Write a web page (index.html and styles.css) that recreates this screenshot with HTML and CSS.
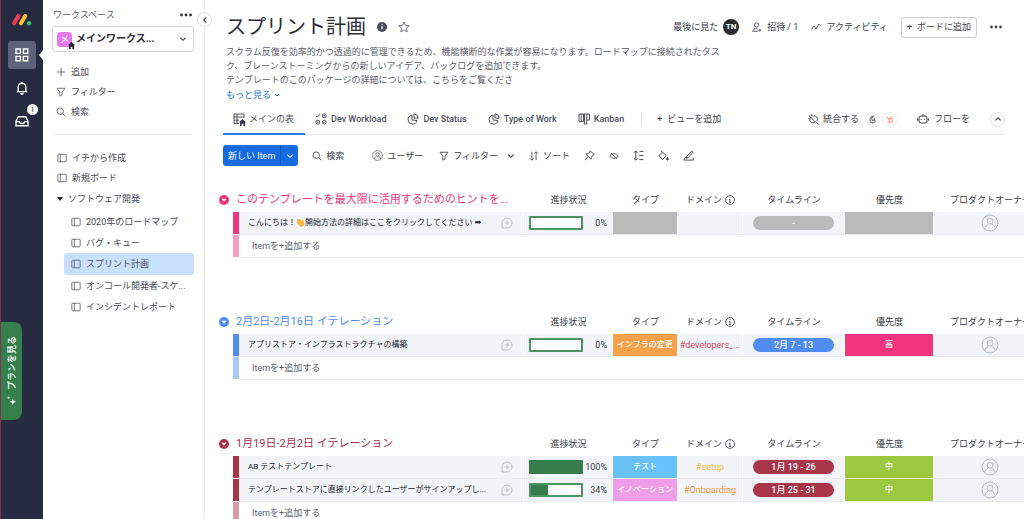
FILE: index.html
```html
<!DOCTYPE html>
<html lang="ja">
<head>
<meta charset="utf-8">
<meta name="viewport" content="width=device-width, initial-scale=1">
<title>スプリント計画</title>
<link rel="stylesheet" href="styles.css">
</head>
<body>
<svg class="sprite" aria-hidden="true">
  <symbol id="board" viewBox="0 0 12 12"><rect x="1" y="1.5" width="10" height="9" rx="1"/><path d="M4 1.5v9"/></symbol>
  <symbol id="plus" viewBox="0 0 12 12"><path d="M6 1v10M1 6h10"/></symbol>
  <symbol id="filter" viewBox="0 0 12 12"><path d="M1.2 1.5h9.6L7.4 6v3.2L4.6 11V6z"/></symbol>
  <symbol id="search" viewBox="0 0 12 12"><circle cx="5" cy="5" r="3.9"/><path d="M8 8l3.2 3.2"/></symbol>
  <symbol id="down" viewBox="0 0 12 12"><path d="M2 4l4 4 4-4"/></symbol>
  <symbol id="up" viewBox="0 0 12 12"><path d="M2 8l4-4 4 4"/></symbol>
  <symbol id="left" viewBox="0 0 12 12"><path d="M8 2L4 6l4 4"/></symbol>
  <symbol id="dots" viewBox="0 0 12 12"><g fill="currentColor" stroke="none"><circle cx="1.5" cy="6" r="1.4"/><circle cx="6" cy="6" r="1.4"/><circle cx="10.5" cy="6" r="1.4"/></g></symbol>
  <symbol id="house" viewBox="0 0 12 12"><path fill="currentColor" stroke="none" d="M6 0L0 5.6h1.6V12h3V8h2.8v4h3V5.6H12z"/></symbol>
  <symbol id="person" viewBox="0 0 18 18"><circle cx="9" cy="9" r="8"/><circle cx="9" cy="7.2" r="2.9"/><path d="M3.8 14.8c.4-2.4 1.6-3.7 3.4-4.5M14.2 14.8c-.4-2.4-1.6-3.7-3.4-4.5"/></symbol>
  <symbol id="comment" viewBox="0 0 14 14"><path d="M1.2 12.8V7a5.8 5.8 0 1 1 5.8 5.8zM7 4.3v5.4M4.3 7h5.4"/></symbol>
  <symbol id="info" viewBox="0 0 12 12"><circle cx="6" cy="6" r="5.2"/><path d="M6 5.2v3.6M5 5.4h1M4.9 8.8h2.2M6 2.9v.9"/></symbol>
  <symbol id="pie" viewBox="0 0 12 12"><path d="M5 2.2a4.5 4.5 0 1 0 5 5.3L5 7z"/><path d="M7 .8a4.6 4.6 0 0 1 4.2 4.4L7 5.1z"/></symbol>
  <symbol id="collapse" viewBox="0 0 12 12"><circle cx="6" cy="6" r="6" fill="currentColor" stroke="none"/><path d="M3 4.6h6L6 8z" fill="#fff" stroke="none"/></symbol>
</svg>

<div class="app">
  <nav class="rail" aria-label="メイン">
    <svg class="logo" viewBox="0 0 20 13"><path d="M2.2 10.3L6.4 3" stroke="#f13c55"/><path d="M9 10.3L13.2 3" stroke="#fdc02f"/><circle cx="17" cy="10.2" r="2.2" fill="#25c467" stroke="none"/></svg>
    <button class="rail-btn active" aria-label="ワークスペース"><svg class="icon i14" viewBox="0 0 14 14"><path d="M1 1h4.4v4.4H1zM8.4 1h4.4v4.4H8.4zM1 8.4h4.4v4.4H1zM8.4 8.4h4.4v4.4H8.4z"/></svg></button>
    <button class="rail-btn" aria-label="通知"><svg class="icon i14" viewBox="0 0 14 14"><path d="M1.8 10.6h10.4M3.2 10.5V6a3.8 3.8 0 0 1 7.6 0v4.5M7 1V2.2M5.6 12.2c.6 1.1 2.2 1.1 2.8 0"/></svg></button>
    <button class="rail-btn" aria-label="受信トレイ"><svg class="icon i14" viewBox="0 0 14 14"><path d="M1 7.4L3.2 2.8h7.6L13 7.4v4.4H1zM1 7.6h3.3c.3 2.6 5.1 2.6 5.4 0H13"/></svg><span class="badge">1</span></button>
    <button class="plans"><svg class="spark" viewBox="0 0 12 12"><path d="M5 3l1 3 3 1-3 1-1 3-1-3-3-1 3-1zM10 0l.6 1.5L12 2l-1.4.5L10 4l-.6-1.5L8 2l1.4-.5z"/></svg><span>プランを見る</span></button>
  </nav>

  <aside class="sidebar">
    <div class="side-top"><label for="ws">ワークスペース</label><button aria-label="ワークスペースのオプション"><svg class="icon i12"><use href="#dots"/></svg></button></div>
    <div class="workspace">
      <span class="ws-logo">メ<svg class="icon ws-home"><use href="#house"/></svg></span>
      <select id="ws"><option>メインワークス...</option></select>
      <svg class="icon i8"><use href="#down"/></svg>
    </div>
    <button class="collapse-side" aria-label="閉じる"><svg class="icon i8"><use href="#left"/></svg></button>
    <div class="actions">
      <button class="side-row"><svg class="icon i10"><use href="#plus"/></svg>追加</button>
      <button class="side-row"><svg class="icon i10"><use href="#filter"/></svg>フィルター</button>
      <button class="side-row"><svg class="icon i10"><use href="#search"/></svg>検索</button>
    </div>
    <div class="boards">
      <a class="side-row" href="#"><svg class="icon i10"><use href="#board"/></svg>イチから作成</a>
      <a class="side-row" href="#"><svg class="icon i10"><use href="#board"/></svg>新規ボード</a>
      <button class="side-row folder"><svg class="caret" viewBox="0 0 6 4"><path d="M0 0h6L3 4z"/></svg>ソフトウェア開発</button>
      <a class="side-row sub" href="#"><svg class="icon i10"><use href="#board"/></svg>2020年のロードマップ</a>
      <a class="side-row sub" href="#"><svg class="icon i10"><use href="#board"/></svg>バグ・キュー</a>
      <a class="side-row sub selected" href="#" aria-current="page"><svg class="icon i10"><use href="#board"/></svg>スプリント計画</a>
      <a class="side-row sub" href="#"><svg class="icon i10"><use href="#board"/></svg>オンコール開発者-スケ...</a>
      <a class="side-row sub" href="#"><svg class="icon i10"><use href="#board"/></svg>インシデントレポート</a>
    </div>
  </aside>

  <main class="main">
    <header class="head">
      <div class="title-row">
        <h1>スプリント計画</h1>
        <button aria-label="ボード情報"><svg class="i10" viewBox="0 0 10 10"><circle cx="5" cy="5" r="5" fill="#4a4d63"/><path d="M5 4.3v3M5 2.2v1.1" stroke="#fff" stroke-width="1.3"/></svg></button>
        <button aria-label="お気に入り"><svg class="icon i12 star" viewBox="0 0 12 12"><path d="M6 .9l1.5 3.4 3.7.4-2.8 2.5.8 3.7L6 9l-3.2 1.9.8-3.7L.8 4.7l3.7-.4z"/></svg></button>
        <div class="head-actions">
          <button>最後に見た<span class="avatar">TN</span></button>
          <button><svg class="icon i10" viewBox="0 0 12 12"><circle cx="5.5" cy="3.6" r="2.6"/><path d="M7 8.5C4 7.2 1.2 8.6 1 11.2h6M9.5 8v3.6M7.7 9.8h3.6"/></svg>招待 / 1</button>
          <button><svg class="icon i10" viewBox="0 0 12 12"><path d="M.5 9l3-4.5 2.5 4 3.5-6 1.8 2"/></svg>アクティビティ</button>
          <button class="outlined"><span>+</span>ボードに追加</button>
          <button aria-label="その他"><svg class="icon i12"><use href="#dots"/></svg></button>
        </div>
      </div>
      <p class="desc">スクラム反復を効率的かつ透過的に管理できるため、機能横断的な作業が容易になります。ロードマップに接続されたタスク、ブレーンストーミングからの新しいアイデア、バックログを追加できます。<br>テンプレートのこのパッケージの詳細については、こちらをご覧くださ</p>
      <a class="more" href="#">もっと見る<svg class="icon i6"><use href="#down"/></svg></a>
    </header>

    <div class="tabs">
      <a class="tab current" href="#"><span class="tab-home"><svg class="icon i12" viewBox="0 0 12 12"><path d="M1 1h10v4M1 1v9.5h5M1 4h10M1 7.2h5M4 1v9.5"/></svg><svg class="icon mini-home"><use href="#house"/></svg></span>メインの表</a>
      <a class="tab" href="#"><svg class="icon i12" viewBox="0 0 12 12"><path d="M.8 2.8l1.4 1.4L5 1.2"/><circle cx="9.2" cy="2.8" r="1.9"/><circle cx="2.8" cy="9.2" r="1.9"/><circle cx="9.2" cy="9.2" r="1.9"/><path d="M8.3 2.8h1.8M2 9.2h1.6M8.3 9.2h1.8"/></svg>Dev Workload</a>
      <a class="tab" href="#"><svg class="icon i12"><use href="#pie"/></svg>Dev Status</a>
      <a class="tab" href="#"><svg class="icon i12"><use href="#pie"/></svg>Type of Work</a>
      <a class="tab" href="#"><svg class="icon i12" viewBox="0 0 12 12"><path d="M3.2 8.5H1V1h10.5v6H8.7V1M3.2 1v7.500M3.2 8.500h2.300V1M6.500 1v10h2.200V7"/></svg>Kanban</a>
      <button class="add-view"><span>+</span>ビューを追加</button>
      <div class="tabs-right">
        <button class="integrate"><svg class="icon i11" viewBox="0 0 12 12"><path d="M3.200 3.800l5 5M3.200 3.800c-1.500 1.500-1.500 3.500-.2 4.800s3.500 1.400 5.200.2M5 2.600c1.600-1 3.400-.7 4.500.5s1.200 3 .2 4.500M1 1.800l2.200 2M3.800.6l.7 1.700M.4 5h1.500M9 9.200l2.200 2"/></svg>統合する
          <span class="apps"><span class="app-dot"><svg viewBox="0 0 10 10" stroke="#777"><path d="M6.8 1.2C4 .8 1.5 3.5 2.3 6.2c.8 3 4.5 3.6 6 .8M6.8 1.2c-2 1-3 3-2.2 4.8M4.6 6h2.8L6.6 3.2"/></svg></span><span class="app-dot"><svg viewBox="0 0 10 10" stroke="#ff9a85"><circle cx="6.3" cy="6" r="1.9"/><path d="M1.2 1.8L5 4.8M6.5 4V1.2M5 7.5L3 9.2"/></svg></span></span></button>
        <button><svg class="icon i12" viewBox="0 0 12 12"><rect x="2" y="3" width="8" height="7" rx="2"/><path d="M6 1v2M.6 5.3v2.4M11.4 5.3v2.4M4.3 6v1M7.7 6v1"/></svg>フローを</button>
        <button class="round" aria-label="ヘッダーを折りたたむ"><svg class="icon i8"><use href="#up"/></svg></button>
      </div>
    </div>

    <div class="toolbar">
      <div class="new-item"><button>新しい Item</button><button class="split" aria-label="その他の追加"><svg class="icon i8"><use href="#down"/></svg></button></div>
      <button class="tool-search"><svg class="icon i10"><use href="#search"/></svg>検索</button>
      <button><svg class="icon i11"><use href="#person"/></svg>ユーザー</button>
      <button class="tool-filter"><svg class="icon i10"><use href="#filter"/></svg>フィルター<svg class="icon i8 after"><use href="#down"/></svg></button>
      <button><svg class="icon i10" viewBox="0 0 12 12"><path d="M3.5 1v10M1.5 9l2 2 2-2M8.5 11V1M6.5 3l2-2 2 2"/></svg>ソート</button>
      <button aria-label="固定"><svg class="icon i11" viewBox="0 0 12 12"><path d="M7 1l4 4-1.2.5L8 8l-.3 2L2 4.5l2.2-.5 2.300-1.800zM4.500 7.500L1 11"/></svg></button>
      <button aria-label="非表示"><svg class="icon i10" viewBox="0 0 12 12"><path d="M.8 6C3 2.3 9 2.3 11.2 6 9 9.7 3 9.7.8 6zM2.500 2.500l7 7"/></svg></button>
      <button aria-label="行の高さ"><svg class="icon i11" viewBox="0 0 12 12"><path d="M3 1v10M1 3l2-2 2 2M1 9l2 2 2-2M7 1.5h4.5M7 6h4.5M7 10.5h4.5"/></svg></button>
      <button aria-label="色"><svg class="icon i11" viewBox="0 0 12 12"><path d="M3 .8l6 5.200-4 4.400L1 6.200l4-3.700"/><path d="M10.300 8c1.600 2.200.8 3 0 3s-1.600-.8 0-3z" fill="currentColor"/></svg></button>
      <button aria-label="編集"><svg class="icon i11" viewBox="0 0 12 12"><path d="M4 7l5.500-5.800 1.500 1.400L5.700 8.300 3.700 9zM3 7.500L.8 11h10.400V8.500"/></svg></button>
    </div>

    <div class="groups">
      <table class="group pink">
        <colgroup><col class="c-gap"><col class="c-strip"><col><col class="c-progress"><col class="c-type"><col class="c-domain"><col class="c-time"><col class="c-priority"><col class="c-owner"></colgroup>
        <thead><tr><th colspan="3"><div class="group-title"><button aria-label="グループを折りたたむ"><svg class="icon i10"><use href="#collapse"/></svg></button><h2>このテンプレートを最大限に活用するためのヒントを...</h2></div></th><th>進捗状況</th><th>タイプ</th><th><span class="with-info">ドメイン<svg class="icon i10"><use href="#info"/></svg></span></th><th>タイムライン</th><th>優先度</th><th>プロダクトオーナー</th></tr></thead>
        <tbody>
          <tr><td class="gap"></td><td class="strip"></td><td><div class="name"><span>こんにちは！<svg class="wave" viewBox="0 0 12 12"><path d="M2.2 5.5L1.3 3.3c-.3-.8.8-1.3 1.2-.5L2 1.9c-.3-.9.9-1.4 1.3-.6l.5.6C4 .8 5 .7 5.4 1.3L8.3 5 8.1 3c0-1.1 1.5-1.2 1.7-.1l1 4.1c.4 2-1.1 4.3-3.3 4.5-1.5.2-2.7-.5-3.6-1.6L1 6.7c-.5-.8.5-1.7 1.2-1.2z" fill="#fbb944"/><path d="M2.5 3L5.5 6.7M3.6 1.9l3.2 4M2.2 5.5l2 2.2" stroke="#dd8b22" stroke-width=".5" fill="none"/></svg>開始方法の詳細はここをクリックしてください <span class="arrow">&#10145;&#65038;</span></span><button aria-label="コメント"><svg class="icon i12"><use href="#comment"/></svg></button></div></td><td><div class="progress"><div class="bar" role="progressbar" aria-label="進捗状況" aria-valuenow="0"></div>0%</div></td><td class="fill grey"></td><td></td><td><span class="pill grey">-</span></td><td class="fill grey"></td><td class="owner"><svg class="icon i18"><use href="#person"/></svg></td></tr>
          <tr class="add"><td class="gap"></td><td class="strip"></td><td colspan="7"><button>Itemを+追加する</button></td></tr>
        </tbody>
      </table>

      <table class="group blue">
        <colgroup><col class="c-gap"><col class="c-strip"><col><col class="c-progress"><col class="c-type"><col class="c-domain"><col class="c-time"><col class="c-priority"><col class="c-owner"></colgroup>
        <thead><tr><th colspan="3"><div class="group-title"><button aria-label="グループを折りたたむ"><svg class="icon i10"><use href="#collapse"/></svg></button><h2>2月2日-2月16日 イテレーション</h2></div></th><th>進捗状況</th><th>タイプ</th><th><span class="with-info">ドメイン<svg class="icon i10"><use href="#info"/></svg></span></th><th>タイムライン</th><th>優先度</th><th>プロダクトオーナー</th></tr></thead>
        <tbody>
          <tr><td class="gap"></td><td class="strip"></td><td><div class="name"><span>アプリストア・インフラストラクチャの構築</span><button aria-label="コメント"><svg class="icon i12"><use href="#comment"/></svg></button></div></td><td><div class="progress"><div class="bar" role="progressbar" aria-label="進捗状況" aria-valuenow="0"></div>0%</div></td><td class="fill orange">インフラの変更</td><td class="tag t-red">#developers_...</td><td><span class="pill">2月 7 - 13</span></td><td class="fill high">高</td><td class="owner"><svg class="icon i18"><use href="#person"/></svg></td></tr>
          <tr class="add"><td class="gap"></td><td class="strip"></td><td colspan="7"><button>Itemを+追加する</button></td></tr>
        </tbody>
      </table>

      <table class="group red">
        <colgroup><col class="c-gap"><col class="c-strip"><col><col class="c-progress"><col class="c-type"><col class="c-domain"><col class="c-time"><col class="c-priority"><col class="c-owner"></colgroup>
        <thead><tr><th colspan="3"><div class="group-title"><button aria-label="グループを折りたたむ"><svg class="icon i10"><use href="#collapse"/></svg></button><h2>1月19日-2月2日 イテレーション</h2></div></th><th>進捗状況</th><th>タイプ</th><th><span class="with-info">ドメイン<svg class="icon i10"><use href="#info"/></svg></span></th><th>タイムライン</th><th>優先度</th><th>プロダクトオーナー</th></tr></thead>
        <tbody>
          <tr><td class="gap"></td><td class="strip"></td><td><div class="name"><span>AB テストテンプレート</span><button aria-label="コメント"><svg class="icon i12"><use href="#comment"/></svg></button></div></td><td><div class="progress"><div class="bar" role="progressbar" aria-label="進捗状況" aria-valuenow="100"><div style="width:100%"></div></div>100%</div></td><td class="fill sky">テスト</td><td class="tag t-yellow">#setup</td><td><span class="pill">1月 19 - 26</span></td><td class="fill mid">中</td><td class="owner"><svg class="icon i18"><use href="#person"/></svg></td></tr>
          <tr><td class="gap"></td><td class="strip"></td><td><div class="name"><span>テンプレートストアに直接リンクしたユーザーがサインアップし...</span><button aria-label="コメント"><svg class="icon i12"><use href="#comment"/></svg></button></div></td><td><div class="progress"><div class="bar" role="progressbar" aria-label="進捗状況" aria-valuenow="34"><div style="width:34%"></div></div>34%</div></td><td class="fill orchid">イノベーション</td><td class="tag t-orange">#Onboarding</td><td><span class="pill">1月 25 - 31</span></td><td class="fill mid">中</td><td class="owner"><svg class="icon i18"><use href="#person"/></svg></td></tr>
          <tr class="add"><td class="gap"></td><td class="strip"></td><td colspan="7"><button>Itemを+追加する</button></td></tr>
        </tbody>
      </table>
    </div>
  </main>
</div>
</body>
</html>
```

FILE: styles.css
```css
* { box-sizing: border-box; }

body {
  margin: 0;
  background: #fff;
  color: #3b3d48;
  font: 9px/14px Roboto, "Noto Sans CJK JP", sans-serif;
  white-space: nowrap;
}

button, select {
  margin: 0;
  padding: 0;
  border: 0;
  background: none;
  color: inherit;
  font: inherit;
  white-space: nowrap;
}

button {
  display: inline-flex;
  align-items: center;
  gap: 5px;
  cursor: pointer;
}

a { color: inherit; text-decoration: none; }
h1, h2, p { margin: 0; font-weight: 400; }
.sprite { position: absolute; width: 0; height: 0; }

.icon { flex: none; fill: none; stroke: currentColor; }
.i6 { width: 6px; height: 6px; stroke-width: 2; }
.i8 { width: 8px; height: 8px; stroke-width: 1.6; }
.i10 { width: 10px; height: 10px; }
.i11 { width: 11px; height: 11px; }
.i12 { width: 12px; height: 12px; }
.i14 { width: 14px; height: 14px; stroke-width: 1.4; }
.i18 { width: 18px; height: 18px; }

.app { display: flex; height: 100vh; overflow: hidden; }

/* Icon rail */
.rail {
  position: relative;
  flex: none;
  display: flex;
  flex-direction: column;
  align-items: center;
  gap: 5px;
  width: 43px;
  padding-top: 13px;
  border-left: 1px solid #84304a;
  background: #272b42;
  color: #fff;
}
.logo { width: 20px; height: 13px; margin-bottom: 10px; stroke-width: 4; stroke-linecap: round; }
.rail-btn { position: relative; justify-content: center; width: 28px; height: 28px; border-radius: 3px; }
.rail-btn.active { background: #5e6278; }
.rail-btn.active::after {
  content: "";
  position: absolute;
  right: -7px;
  border: 5px solid transparent;
  border-right: 4px solid #fff;
  border-left: 0;
}
.badge {
  position: absolute;
  top: -3px;
  right: -2px;
  width: 11px;
  border-radius: 50%;
  background: #fff;
  color: #272b42;
  font-size: 8px;
  line-height: 11px;
  text-align: center;
}
.plans {
  position: absolute;
  left: 0;
  bottom: 99px;
  flex-direction: column-reverse;
  justify-content: center;
  gap: 6px;
  width: 21px;
  height: 98px;
  border-radius: 0 8px 8px 0;
  background: #357f4c;
  font-weight: 500;
}
.plans span { writing-mode: vertical-rl; text-orientation: sideways; transform: rotate(180deg); }
.spark { width: 10px; height: 10px; fill: #fff; transform: rotate(-90deg); }

/* Sidebar */
.sidebar {
  position: relative;
  flex: none;
  width: 162px;
  padding: 8px 10px;
  border-right: 1px solid #e9ebf0;
}
.side-top { display: flex; justify-content: space-between; padding-right: 2px; color: #5a5d6b; }
.side-top svg { color: #333; }
.workspace {
  display: flex;
  align-items: center;
  gap: 4px;
  height: 26px;
  margin: 4px 0 10px -1px;
  padding: 0 6px 0 4px;
  border: 1px solid #d5d7df;
  border-radius: 3px;
}
.ws-logo {
  position: relative;
  width: 15px;
  border-radius: 4px;
  background: #e57af0;
  color: #fff;
  font-size: 10px;
  line-height: 15px;
  text-align: center;
}
.ws-home { position: absolute; right: -3px; bottom: -2px; width: 7px; height: 7px; color: #222; }
.workspace select { flex: 1; min-width: 0; appearance: none; font-size: 10px; font-weight: 700; color: #292b35; }
.collapse-side, .round {
  justify-content: center;
  width: 15px;
  height: 15px;
  border: 1px solid #dcdfe6;
  border-radius: 50%;
  background: #fff;
}
.collapse-side { position: absolute; top: 12px; right: -8px; z-index: 1; }
.side-row { display: flex; align-items: center; gap: 5px; height: 20px; padding-left: 4px; color: #484a56; }
.side-row .icon { color: #5a5d6c; }
.actions { margin: 0 2px; padding-bottom: 12px; border-bottom: 1px solid #dfe3ee; }
.actions .side-row { padding-left: 1px; }
.boards { padding-top: 13px; }
.folder { height: 21px; margin-bottom: 2px; }
.caret { width: 6px; height: 4px; fill: #222; }
.sub { height: 21px; margin-left: 11px; padding-left: 7px; border-radius: 3px; }
.sub.selected { height: 22px; background: #c9e1fd; }

/* Board header */
.main { flex: 1; min-width: 0; overflow: hidden; }
.head { padding: 12px 22px 0 21px; }
.title-row { display: flex; align-items: center; gap: 11px; height: 30px; }
h1 { color: #2b2d36; font-size: 20px; line-height: 30px; }
.star { color: #6b6e7c; }
.head-actions { display: flex; align-items: center; gap: 13px; margin-left: auto; }
.head-actions .icon { color: #444; }
.avatar {
  width: 16px;
  border-radius: 50%;
  background: #2c2c2f;
  color: #fff;
  font-size: 8px;
  font-weight: 700;
  line-height: 16px;
  text-align: center;
}
.outlined { height: 21px; padding: 0 5px; border: 1px solid #c9ccd8; border-radius: 3px; }
.desc { max-width: 500px; margin-top: 3px; color: #5b5e6c; white-space: normal; }
.more { display: inline-flex; align-items: center; gap: 3px; margin-top: 1px; color: #1a73e8; }

/* View tabs */
.tabs { display: flex; align-items: center; height: 31px; margin: 2px 19px 0 18px; border-bottom: 1px solid #e3e5ec; }
.tab { display: flex; align-items: center; gap: 4px; align-self: stretch; padding: 0 11px 0 10px; color: #50525d; font-weight: 500; }
.tab.current { margin-bottom: -1px; border-bottom: 2px solid #2a7de9; font-weight: 400; }
.tab-home { position: relative; display: flex; }
.mini-home { position: absolute; right: -1px; bottom: -1px; width: 7px; height: 7px; color: #33364a; }
.add-view { margin-left: 6px; padding-left: 15px; border-left: 1px solid #e3e5ec; }
.tabs-right { display: flex; align-items: center; gap: 20px; margin-left: auto; }
.integrate, .apps { display: flex; align-items: center; gap: 4px; }
.apps { gap: 2px; margin-left: 2px; }
.app-dot { display: grid; place-items: center; width: 15px; height: 15px; border: 1px solid #e9ebf0; border-radius: 50%; }
.app-dot svg { width: 9px; height: 9px; fill: none; stroke-width: 1.3; }

/* Toolbar */
.toolbar { display: flex; align-items: center; gap: 14px; padding: 10px 19px 0 18px; }
.toolbar > button { gap: 4px; }
.new-item { display: flex; height: 21px; overflow: hidden; border-radius: 3px; background: #176be0; color: #fff; }
.new-item button { padding: 0 5px; }
.new-item .split { width: 18px; border-left: 1px solid #0e57bd; }
.tool-search { padding-right: 14px; }
.tool-filter { padding-left: 2px; }
.after { margin-left: 5px; }

/* Groups */
.groups { display: grid; gap: 52px; padding: 22px 0 0 14px; }
.group { table-layout: fixed; width: 100%; min-width: 828px; border-spacing: 0; }
.c-gap { width: 14px; }
.c-strip { width: 6px; }
.c-progress { width: 89px; }
.c-type { width: 65px; }
.c-domain { width: 65px; }
.c-time { width: 102px; }
.c-priority { width: 89px; }
.c-owner { width: 113px; }

.pink { --tone: #f0357d; --soft: #f79dc2; }
.blue { --tone: #4f8df5; --soft: #a8c9fb; }
.red { --tone: #a83548; --soft: #d69ba6; }

th { height: 24px; padding: 0; font-weight: 400; text-align: center; }
.with-info { display: flex; align-items: center; justify-content: center; gap: 3px; }
.group-title { display: flex; align-items: center; gap: 7px; color: var(--tone); }
h2 { font-size: 11px; line-height: 18px; }

td { height: 23px; padding: 0; border-right: 1px solid #fff; border-bottom: 1px solid #e9ebf1; background: #f2f4f7; text-align: center; line-height: 14px; }
td.gap { border: 0; background: none; }
td.strip { border-right: 0; border-bottom-color: #fff; background: var(--tone); }
td.owner { color: #b9bcc8; line-height: 0; }
.name { display: flex; align-items: center; justify-content: space-between; padding: 0 10px 0 9px; color: #23252e; font-size: 8px; }
.name button { color: #b4b7c4; }
.wave { width: 9px; height: 9px; vertical-align: middle; }
.arrow { font-family: "DejaVu Sans", sans-serif; }
.progress { display: flex; align-items: center; justify-content: space-between; padding: 0 5px; }
.bar { width: 54px; height: 14px; border: 2px solid #4c9463; border-radius: 1px; background: #fff; }
.bar div { height: 100%; background: #357d4b; }
.bar[aria-valuenow="100"] { border-color: #357d4b; }
.fill { color: #fff; font-size: 8px; font-weight: 500; }
.pill { display: block; width: 81px; margin: 0 auto; border-radius: 7px; background: var(--tone); color: #fff; font-weight: 500; }
.grey { background: #bababa; }
.orange { background: #f7a24b; }
.sky { background: #69c1f9; }
.orchid { background: #ef9de9; }
.high { background: #f0357d; }
.mid { background: #9cc83f; }
.t-red { color: #e2445c; }
.t-yellow { color: #fdbc40; }
.t-orange { color: #f79540; }

.add td { background: #fff; text-align: left; }
.add td.strip { background: var(--soft); }
.add button { padding-left: 13px; color: #5b5e6c; }
```
